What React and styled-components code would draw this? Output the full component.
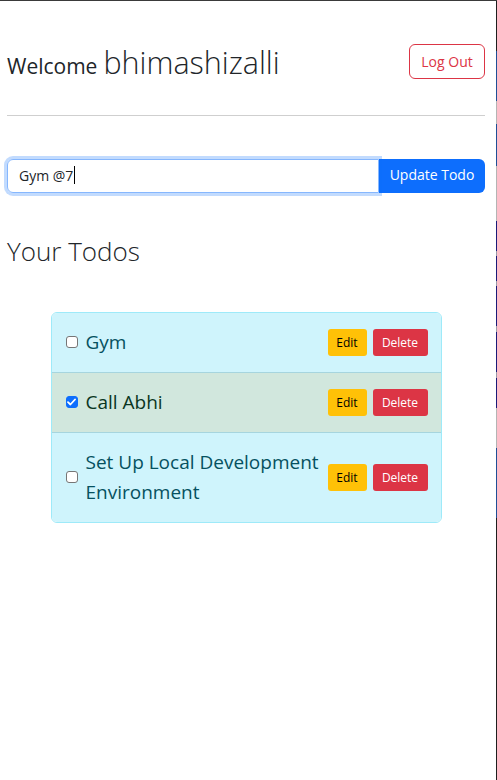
import React, { useState } from "react";
import styled, { createGlobalStyle } from "styled-components";

const Global = createGlobalStyle`
  html, body { margin: 0; padding: 0; background: #fff; }
  body { font-family: "Open Sans", "Noto Sans", sans-serif; color: #212529; }
  * { box-sizing: border-box; }
`;

const Frame = styled.div`
  display: flex;
  width: 497px;
  height: 780px;
  border-top: 1px solid #3a3a3a;
  overflow: hidden;
`;

const Main = styled.div`
  flex: 1;
  padding: 0 11px 0 7px;
  background: #fff;
`;

const Strip = styled.div`
  width: 1px;
  display: flex;
  flex-direction: column;
`;

const Seg = styled.div`
  height: ${(p) => p.$h}px;
  background: ${(p) => p.$c};
  flex: none;
`;

const Header = styled.div`
  margin-top: 43px;
  height: 35px;
  display: flex;
  align-items: center;
  justify-content: space-between;
`;

const Welcome = styled.h3`
  margin: 0;
  font-size: 21px;
  font-weight: 400;
  line-height: 1;
  display: flex;
  align-items: baseline;
  gap: 6px;
  padding-top: 1px;
`;

const Name = styled.span`
  font-size: 30.5px;
  font-weight: 300;
`;

const OutlineBtn = styled.button`
  height: 35px;
  width: 76px;
  border: 1px solid #dc3545;
  color: #dc3545;
  background: #fff;
  border-radius: 6px;
  font-family: inherit;
  font-size: 14px;
  padding: 0;
`;

const Divider = styled.hr`
  margin: 36px 0 0;
  border: none;
  height: 1px;
  background: #cfcfcf;
`;

const InputGroup = styled.div`
  margin-top: 43px;
  display: flex;
  height: 34px;
`;

const TextInput = styled.div`
  flex: 1;
  border: 1px solid #86b7fe;
  border-radius: 6px 0 0 6px;
  box-shadow: 0 0 0 3px rgba(13, 110, 253, 0.25);
  display: flex;
  align-items: center;
  padding-left: 11px;
  padding-bottom: 2px;
  font-size: 14px;
  color: #212529;
  position: relative;
  z-index: 1;
`;

const Caret = styled.span`
  display: inline-block;
  width: 1px;
  height: 18px;
  background: #000;
  margin-left: 1px;
`;

const PrimaryBtn = styled.button`
  width: 106px;
  border: none;
  background: #0d6efd;
  color: #fff;
  border-radius: 0 6px 6px 0;
  font-family: inherit;
  font-size: 14px;
  padding: 0 0 3px;
`;

const Title = styled.h2`
  margin: 40px 0 0;
  font-size: 26px;
  font-weight: 300;
  line-height: 36px;
`;

const List = styled.ul`
  list-style: none;
  margin: 43px auto 0;
  padding: 0;
  width: 391px;
  border: 1px solid #9eeaf9;
  border-radius: 6px;
  overflow: hidden;
`;

const Item = styled.li`
  display: flex;
  align-items: center;
  padding: 14px 13px 15px 14px;
  background: ${(p) => (p.$done ? "#d1e7dd" : "#cff4fc")};
  color: ${(p) => (p.$done ? "#0a3622" : "#055160")};
  border-top: ${(p) => (p.$first ? "none" : "1px solid #a6d5de")};
`;

const Check = styled.span`
  flex: none;
  width: 12px;
  height: 12px;
  border-radius: 3px;
  border: 1px solid ${(p) => (p.$on ? "#0d6efd" : "#767676")};
  background: ${(p) => (p.$on ? "#0d6efd" : "#fff")};
  display: flex;
  align-items: center;
  justify-content: center;
  margin-right: 8px;
`;

const Label = styled.span`
  flex: 1;
  font-size: 19px;
  line-height: 30px;
  padding-right: 2px;
`;

const Actions = styled.div`
  display: flex;
  gap: 6px;
  flex: none;
`;

const SmallBtn = styled.button`
  height: 27px;
  border: none;
  border-radius: 3px;
  font-family: inherit;
  font-size: 12px;
  padding: 0;
  width: ${(p) => p.$w}px;
  background: ${(p) => (p.$kind === "edit" ? "#ffc107" : "#dc3545")};
  color: ${(p) => (p.$kind === "edit" ? "#000" : "#fff")};
`;

const segs = [
  [50, "#1e1e1e"], [50, "#1f4e96"], [23, "#b4b4b4"], [42, "#1f4e96"], [55, "#b4b4b4"],
  [30, "#1a1a78"], [5, "#9a9aa8"], [25, "#1a1a78"], [5, "#9a9aa8"], [40, "#1a1a78"],
  [6, "#9a9aa8"], [40, "#1a1a78"], [6, "#9a9aa8"], [30, "#1a1a78"], [40, "#b4b4b4"],
  [70, "#1f4e96"], [280, "#1e1e1e"],
];

const todos = [
  { text: "Gym", done: false },
  { text: "Call Abhi", done: true },
  { text: "Set Up Local Development Environment", done: false },
];

export default function App() {
  const [items] = useState(todos);
  return (
    <>
      <Global />
      <Frame>
        <Main>
          <Header>
            <Welcome>
              Welcome <Name>bhimashizalli</Name>
            </Welcome>
            <OutlineBtn>Log Out</OutlineBtn>
          </Header>
          <Divider />
          <InputGroup>
            <TextInput>
              Gym @7<Caret />
            </TextInput>
            <PrimaryBtn>Update Todo</PrimaryBtn>
          </InputGroup>
          <Title>Your Todos</Title>
          <List>
            {items.map((t, i) => (
              <Item key={t.text} $done={t.done} $first={i === 0}>
                <Check $on={t.done}>
                  {t.done && (
                    <svg width="9" height="8" viewBox="0 0 9 8">
                      <path d="M1 4.2 L3.4 6.5 L8 1.5" fill="none" stroke="#fff" strokeWidth="1.8" strokeLinecap="round" strokeLinejoin="round" />
                    </svg>
                  )}
                </Check>
                <Label>{t.text}</Label>
                <Actions>
                  <SmallBtn $kind="edit" $w={39}>Edit</SmallBtn>
                  <SmallBtn $kind="delete" $w={55}>Delete</SmallBtn>
                </Actions>
              </Item>
            ))}
          </List>
        </Main>
        <Strip>
          {segs.map(([h, c], i) => (
            <Seg key={i} $h={h} $c={c} />
          ))}
        </Strip>
      </Frame>
    </>
  );
}
